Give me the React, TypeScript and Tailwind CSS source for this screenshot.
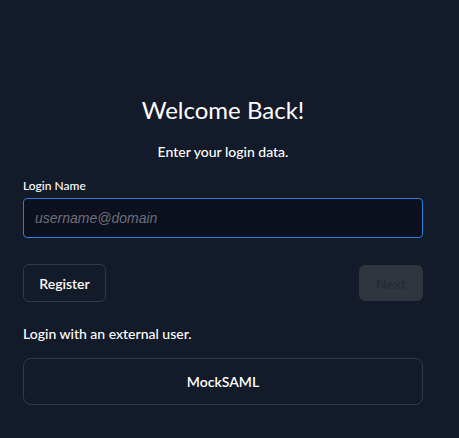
export default function App() {
  return (
    <div className="min-h-[438px] w-full bg-[#131a29] text-white" style={{ fontFamily: "Lato, 'Noto Sans', sans-serif" }}>
      <div className="ml-[23px] w-[400px] pt-[94px] flex flex-col">
        <h1 className="text-center text-[24px] leading-[32px] font-normal">Welcome Back!</h1>
        <p className="mt-[16px] text-center text-[14px] leading-[20px] font-medium">Enter your login data.</p>

        <label className="mt-[16px] text-[12px] leading-[16px] font-medium">Login Name</label>
        <input
          className="mt-[4px] h-[40px] w-full rounded-[4px] border border-[#2b7de0] bg-[#0c111d] px-[11px] text-[14px] outline-none placeholder:italic placeholder:text-[#6b6f78]"
          style={{ fontFamily: "'Liberation Sans', Arial, sans-serif" }}
          placeholder="username@domain"
        />

        <div className="mt-[26px] flex items-center justify-between">
          <button className="h-[38px] w-[83px] rounded-[6px] border border-[#333946] text-[14px] font-semibold">Register</button>
          <button className="h-[36px] w-[64px] rounded-[6px] bg-[#31353f] text-[14px] font-semibold text-[#262b36]">Next</button>
        </div>

        <p className="mt-[22px] text-[14px] leading-[20px] font-medium">Login with an external user.</p>
        <button className="mt-[14px] h-[47px] w-full rounded-[8px] border border-[#333946] text-[14px] font-semibold">MockSAML</button>
      </div>
    </div>
  );
}
